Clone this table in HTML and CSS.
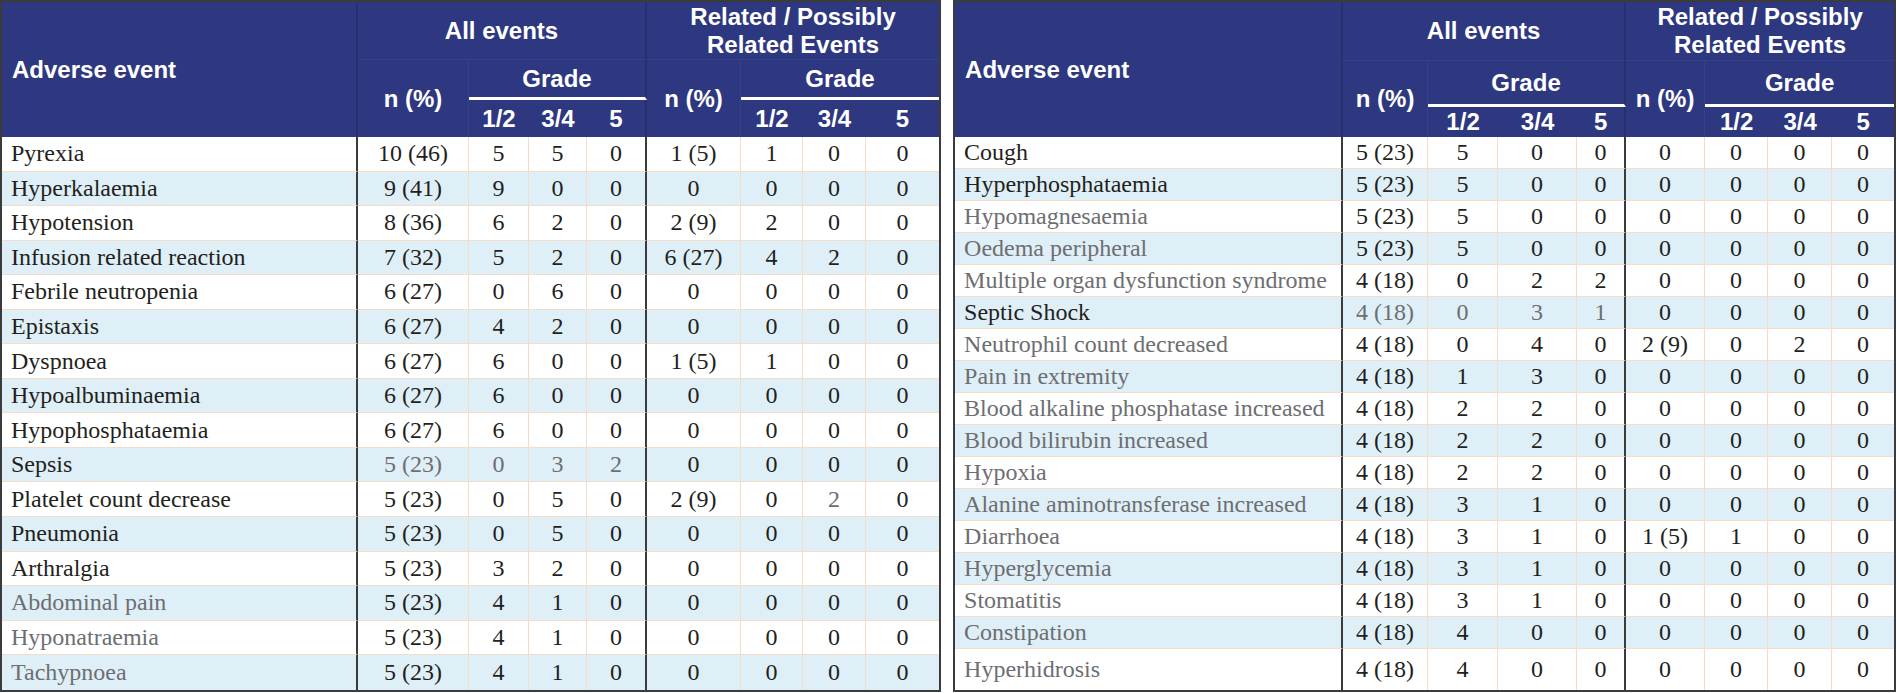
FILE: index.html
```html
<!DOCTYPE html>
<html lang="en">
<head>
    <meta charset="UTF-8">
    <meta name="viewport" content="width=device-width, initial-scale=1.0">
    <title>Adverse events</title>
    <link rel="stylesheet" href="styles.css">
</head>
<body>
<div class="wrap">

    <!-- left half -->
    <table class="ae left">
        <colgroup>
            <col style="width:356px"><col style="width:111px">
            <col style="width:60px"><col style="width:58px"><col style="width:60px">
            <col style="width:94px">
            <col style="width:62px"><col style="width:63px"><col style="width:73px">
        </colgroup>
        <thead>
            <tr class="h1">
                <th rowspan="3" class="name">Adverse event</th>
                <th colspan="4" class="sec all">All events</th>
                <th colspan="4" class="sec">Related / Possibly<br>Related Events</th>
            </tr>
            <tr class="h2">
                <th rowspan="2" class="n">n (%)</th>
                <th colspan="3" class="grade all">Grade</th>
                <th rowspan="2" class="n">n (%)</th>
                <th colspan="3" class="grade">Grade</th>
            </tr>
            <tr class="h3">
                <th>1/2</th><th>3/4</th><th class="all">5</th>
                <th>1/2</th><th>3/4</th><th>5</th>
            </tr>
        </thead>
        <tbody>
            <tr><td class="name">Pyrexia</td><td>10 (46)</td><td>5</td><td>5</td><td class="sep">0</td><td>1 (5)</td><td>1</td><td>0</td><td>0</td></tr>
            <tr><td class="name">Hyperkalaemia</td><td>9 (41)</td><td>9</td><td>0</td><td class="sep">0</td><td>0</td><td>0</td><td>0</td><td>0</td></tr>
            <tr><td class="name">Hypotension</td><td>8 (36)</td><td>6</td><td>2</td><td class="sep">0</td><td>2 (9)</td><td>2</td><td>0</td><td>0</td></tr>
            <tr><td class="name">Infusion related reaction</td><td>7 (32)</td><td>5</td><td>2</td><td class="sep">0</td><td>6 (27)</td><td>4</td><td>2</td><td>0</td></tr>
            <tr><td class="name">Febrile neutropenia</td><td>6 (27)</td><td>0</td><td>6</td><td class="sep">0</td><td>0</td><td>0</td><td>0</td><td>0</td></tr>
            <tr><td class="name">Epistaxis</td><td>6 (27)</td><td>4</td><td>2</td><td class="sep">0</td><td>0</td><td>0</td><td>0</td><td>0</td></tr>
            <tr><td class="name">Dyspnoea</td><td>6 (27)</td><td>6</td><td>0</td><td class="sep">0</td><td>1 (5)</td><td>1</td><td>0</td><td>0</td></tr>
            <tr><td class="name">Hypoalbuminaemia</td><td>6 (27)</td><td>6</td><td>0</td><td class="sep">0</td><td>0</td><td>0</td><td>0</td><td>0</td></tr>
            <tr><td class="name">Hypophosphataemia</td><td>6 (27)</td><td>6</td><td>0</td><td class="sep">0</td><td>0</td><td>0</td><td>0</td><td>0</td></tr>
            <tr><td class="name">Sepsis</td><td class="grey">5 (23)</td><td class="grey">0</td><td class="grey">3</td><td class="sep grey">2</td><td>0</td><td>0</td><td>0</td><td>0</td></tr>
            <tr><td class="name">Platelet count decrease</td><td>5 (23)</td><td>0</td><td>5</td><td class="sep">0</td><td>2 (9)</td><td>0</td><td class="grey">2</td><td>0</td></tr>
            <tr><td class="name">Pneumonia</td><td>5 (23)</td><td>0</td><td>5</td><td class="sep">0</td><td>0</td><td>0</td><td>0</td><td>0</td></tr>
            <tr><td class="name">Arthralgia</td><td>5 (23)</td><td>3</td><td>2</td><td class="sep">0</td><td>0</td><td>0</td><td>0</td><td>0</td></tr>
            <tr><td class="name grey">Abdominal pain</td><td>5 (23)</td><td>4</td><td>1</td><td class="sep">0</td><td>0</td><td>0</td><td>0</td><td>0</td></tr>
            <tr><td class="name grey">Hyponatraemia</td><td>5 (23)</td><td>4</td><td>1</td><td class="sep">0</td><td>0</td><td>0</td><td>0</td><td>0</td></tr>
            <tr><td class="name grey">Tachypnoea</td><td>5 (23)</td><td>4</td><td>1</td><td class="sep">0</td><td>0</td><td>0</td><td>0</td><td>0</td></tr>
        </tbody>
    </table>

    <!-- right half -->
    <table class="ae right">
        <colgroup>
            <col style="width:388px"><col style="width:85px">
            <col style="width:70px"><col style="width:79px"><col style="width:49px">
            <col style="width:79px">
            <col style="width:63px"><col style="width:64px"><col style="width:62px">
        </colgroup>
        <thead>
            <tr class="h1">
                <th rowspan="3" class="name">Adverse event</th>
                <th colspan="4" class="sec all">All events</th>
                <th colspan="4" class="sec">Related / Possibly<br>Related Events</th>
            </tr>
            <tr class="h2">
                <th rowspan="2" class="n">n (%)</th>
                <th colspan="3" class="grade all">Grade</th>
                <th rowspan="2" class="n">n (%)</th>
                <th colspan="3" class="grade">Grade</th>
            </tr>
            <tr class="h3">
                <th>1/2</th><th>3/4</th><th class="all">5</th>
                <th>1/2</th><th>3/4</th><th>5</th>
            </tr>
        </thead>
        <tbody>
            <tr><td class="name">Cough</td><td>5 (23)</td><td>5</td><td>0</td><td class="sep">0</td><td>0</td><td>0</td><td>0</td><td>0</td></tr>
            <tr><td class="name">Hyperphosphataemia</td><td>5 (23)</td><td>5</td><td>0</td><td class="sep">0</td><td>0</td><td>0</td><td>0</td><td>0</td></tr>
            <tr><td class="name grey">Hypomagnesaemia</td><td>5 (23)</td><td>5</td><td>0</td><td class="sep">0</td><td>0</td><td>0</td><td>0</td><td>0</td></tr>
            <tr><td class="name grey">Oedema peripheral</td><td>5 (23)</td><td>5</td><td>0</td><td class="sep">0</td><td>0</td><td>0</td><td>0</td><td>0</td></tr>
            <tr><td class="name grey">Multiple organ dysfunction syndrome</td><td>4 (18)</td><td>0</td><td>2</td><td class="sep">2</td><td>0</td><td>0</td><td>0</td><td>0</td></tr>
            <tr><td class="name">Septic Shock</td><td class="grey">4 (18)</td><td class="grey">0</td><td class="grey">3</td><td class="sep grey">1</td><td>0</td><td>0</td><td>0</td><td>0</td></tr>
            <tr><td class="name grey">Neutrophil count decreased</td><td>4 (18)</td><td>0</td><td>4</td><td class="sep">0</td><td>2 (9)</td><td>0</td><td>2</td><td>0</td></tr>
            <tr><td class="name grey">Pain in extremity</td><td>4 (18)</td><td>1</td><td>3</td><td class="sep">0</td><td>0</td><td>0</td><td>0</td><td>0</td></tr>
            <tr><td class="name grey">Blood alkaline phosphatase increased</td><td>4 (18)</td><td>2</td><td>2</td><td class="sep">0</td><td>0</td><td>0</td><td>0</td><td>0</td></tr>
            <tr><td class="name grey">Blood bilirubin increased</td><td>4 (18)</td><td>2</td><td>2</td><td class="sep">0</td><td>0</td><td>0</td><td>0</td><td>0</td></tr>
            <tr><td class="name grey">Hypoxia</td><td>4 (18)</td><td>2</td><td>2</td><td class="sep">0</td><td>0</td><td>0</td><td>0</td><td>0</td></tr>
            <tr><td class="name grey">Alanine aminotransferase increased</td><td>4 (18)</td><td>3</td><td>1</td><td class="sep">0</td><td>0</td><td>0</td><td>0</td><td>0</td></tr>
            <tr><td class="name grey">Diarrhoea</td><td>4 (18)</td><td>3</td><td>1</td><td class="sep">0</td><td>1 (5)</td><td>1</td><td>0</td><td>0</td></tr>
            <tr><td class="name grey">Hyperglycemia</td><td>4 (18)</td><td>3</td><td>1</td><td class="sep">0</td><td>0</td><td>0</td><td>0</td><td>0</td></tr>
            <tr><td class="name grey">Stomatitis</td><td>4 (18)</td><td>3</td><td>1</td><td class="sep">0</td><td>0</td><td>0</td><td>0</td><td>0</td></tr>
            <tr><td class="name grey">Constipation</td><td>4 (18)</td><td>4</td><td>0</td><td class="sep">0</td><td>0</td><td>0</td><td>0</td><td>0</td></tr>
            <tr class="last"><td class="name grey">Hyperhidrosis</td><td>4 (18)</td><td>4</td><td>0</td><td class="sep">0</td><td>0</td><td>0</td><td>0</td><td>0</td></tr>
        </tbody>
    </table>

</div>
</body>
</html>
```

FILE: styles.css
```css
html, body{
    margin: 0;
    background-color: #ffffff;
}
.wrap{
    display: flex;
    gap: 12px;
    width: 1896px;
}
table.ae{
    border: 2px solid #3b3b3b;
    border-collapse: separate;
    border-spacing: 0;
    table-layout: fixed;
    flex: none;
}
table.left{
    width: 941px;
}
table.right{
    width: 943px;
}

/* header */
th{
    box-sizing: border-box;
    background-color: #2e3880;
    color: #ffffff;
    font-family: "Liberation Sans", Arial, sans-serif;
    font-weight: bold;
    font-size: 24px;
    line-height: 28px;
    text-align: center;
    vertical-align: middle;
    padding: 0;
}
th.name{
    text-align: left;
    padding-left: 10px;
    border-right: 2px solid #27306f;
}
th.sec{
    border-bottom: 1px solid #35408a;
}
th.all{
    border-right: 2px solid #27306f;
}
th.n{
    border-right: 1px solid #35408a;
}
th.grade{
    border-bottom: 3px solid #ffffff;
}
.left .h1{ height: 58px; }
.left .h2{ height: 40px; }
.left .h3{ height: 37px; }
.right .h1{ height: 59px; }
.right .h2{ height: 46px; }
.right .h3{ height: 30px; }
.right .h3 th{
    line-height: 26px;
}

/* body */
td{
    box-sizing: border-box;
    font-family: "Liberation Serif", "Times New Roman", serif;
    font-size: 24px;
    color: #231f20;
    text-align: center;
    vertical-align: middle;
    padding: 0;
    white-space: nowrap;
    border-right: 1px solid #f4dcc6;
    border-bottom: 1px solid #f4dcc6;
}
td.name{
    text-align: left;
    padding-left: 9px;
    border-right: 2px solid #3b3b3b;
}
td.sep{
    border-right: 2px solid #3b3b3b;
}
td:last-child{
    border-right: none;
}
tbody tr:last-child td{
    border-bottom: none;
}
tbody tr:nth-child(even) td{
    background-color: #dfeff7;
}
td.grey{
    color: #6d6e71;
}
.left tbody tr{
    height: 34.56px;
}
.right tbody tr{
    height: 31.9px;
}
.right tbody tr.last{
    height: 41px;
}
```
